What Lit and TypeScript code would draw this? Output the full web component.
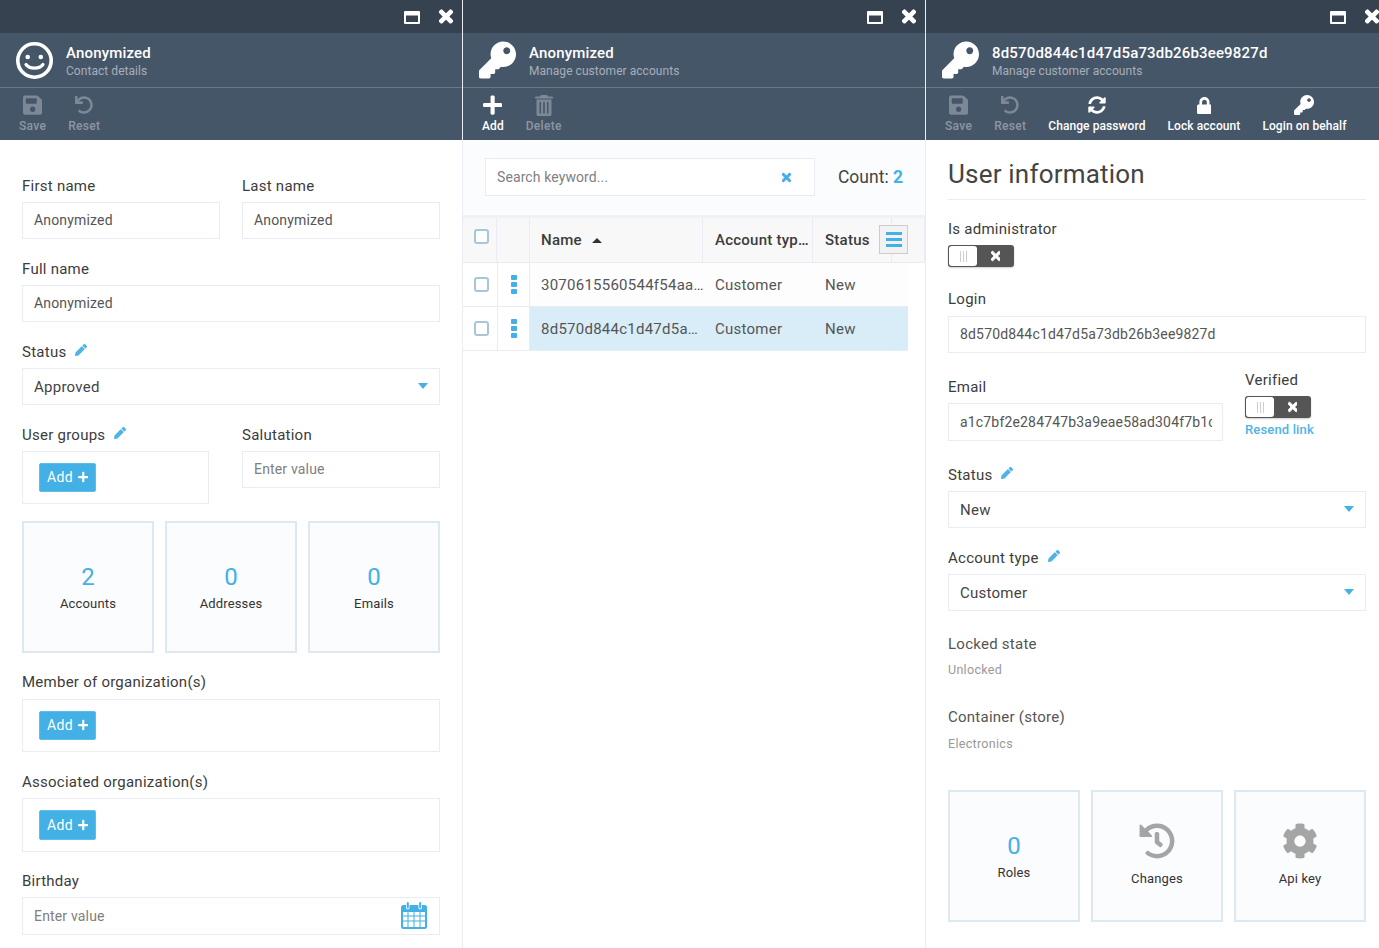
import { LitElement, html, css } from "lit";
import { customElement } from "lit/decorators.js";

const P: Record<string, [number, string]> = {
  key: [512, "M512 176.001C512 273.203 433.202 352 336 352c-11.22 0-22.19-1.062-32.827-3.069l-24.012 27.014A23.999 23.999 0 0 1 261.223 384H224v40c0 13.255-10.745 24-24 24h-40v40c0 13.255-10.745 24-24 24H24c-13.255 0-24-10.745-24-24v-78.059c0-6.365 2.529-12.47 7.029-16.971l161.802-161.802C163.108 213.814 160 195.271 160 176 160 78.798 238.797.001 335.999 0 433.488-.001 512 78.511 512 176.001zM336 128c0 26.51 21.49 48 48 48s48-21.49 48-48-21.49-48-48-48-48 21.49-48 48z"],
  save: [448, "M433.941 129.941l-83.882-83.882A48 48 0 0 0 316.118 32H48C21.49 32 0 53.49 0 80v352c0 26.51 21.49 48 48 48h352c26.51 0 48-21.49 48-48V163.882a48 48 0 0 0-14.059-33.941zM224 416c-35.346 0-64-28.654-64-64 0-35.346 28.654-64 64-64s64 28.654 64 64c0 35.346-28.654 64-64 64zm96-304.52V212c0 6.627-5.373 12-12 12H76c-6.627 0-12-5.373-12-12V108c0-6.627 5.373-12 12-12h228.52c3.183 0 6.235 1.264 8.485 3.515l3.48 3.48A11.996 11.996 0 0 1 320 111.48z"],
  undo: [512, "M212.333 224.333H12c-6.627 0-12-5.373-12-12V12C0 5.373 5.373 0 12 0h48c6.627 0 12 5.373 12 12v78.112C117.773 39.279 184.26 7.47 258.175 8.007c136.906.994 246.448 111.623 246.157 248.532C504.041 393.258 393.12 504 256.333 504c-64.089 0-122.496-24.313-166.51-64.215-5.099-4.622-5.334-12.554-.467-17.42l33.967-33.967c4.474-4.474 11.662-4.717 16.401-.525C170.76 415.336 211.58 432 256.333 432c97.268 0 176-78.716 176-176 0-97.267-78.716-176-176-176-58.496 0-110.28 28.476-142.274 72.333h98.274c6.627 0 12 5.373 12 12v48c0 6.627-5.373 12-12 12z"],
  times: [352, "M242.72 256l100.07-100.07c12.28-12.28 12.28-32.19 0-44.48l-22.24-22.24c-12.28-12.28-32.19-12.28-44.48 0L176 189.28 75.93 89.21c-12.28-12.28-32.19-12.28-44.48 0L9.21 111.45c-12.28 12.28-12.28 32.19 0 44.48L109.28 256 9.21 356.07c-12.28 12.28-12.28 32.19 0 44.48l22.24 22.24c12.28 12.28 32.2 12.28 44.48 0L176 322.72l100.07 100.07c12.28 12.28 32.2 12.28 44.48 0l22.24-22.24c12.28-12.28 12.28-32.19 0-44.48L242.72 256z"],
  lock: [448, "M400 224h-24v-72C376 68.2 307.8 0 224 0S72 68.2 72 152v72H48c-26.5 0-48 21.5-48 48v192c0 26.5 21.5 48 48 48h352c26.5 0 48-21.5 48-48V272c0-26.5-21.5-48-48-48zm-104 0H152v-72c0-39.7 32.3-72 72-72s72 32.3 72 72v72z"],
  sync: [512, "M370.72 133.28C339.458 104.008 298.888 87.962 255.848 88c-77.458.068-144.328 53.178-162.791 126.85-1.344 5.363-6.122 9.15-11.651 9.15H24.103c-7.498 0-13.194-6.807-11.807-14.176C33.933 94.924 134.813 8 256 8c66.448 0 126.791 26.136 171.315 68.685L463.03 40.97C478.149 25.851 504 36.559 504 57.941V192c0 13.255-10.745 24-24 24H345.941c-21.382 0-32.09-25.851-16.971-40.971l41.75-41.749zM32 296h134.059c21.382 0 32.09 25.851 16.971 40.971l-41.75 41.75c31.262 29.273 71.835 45.319 114.876 45.28 77.418-.07 144.315-53.144 162.787-126.849 1.344-5.363 6.122-9.15 11.651-9.15h57.304c7.498 0 13.194 6.807 11.807 14.176C478.067 417.076 377.187 504 256 504c-66.448 0-126.791-26.136-171.315-68.685L48.97 471.03C33.851 486.149 8 475.441 8 454.059V320c0-13.255 10.745-24 24-24z"],
  plus: [448, "M416 208H272V64c0-17.67-14.33-32-32-32h-32c-17.67 0-32 14.33-32 32v144H32c-17.67 0-32 14.33-32 32v32c0 17.67 14.33 32 32 32h144v144c0 17.67 14.33 32 32 32h32c17.67 0 32-14.33 32-32V304h144c17.67 0 32-14.33 32-32v-32c0-17.67-14.33-32-32-32z"],
  pencil: [512, "M497.9 142.1l-46.1 46.1c-4.7 4.7-12.3 4.7-17 0l-111-111c-4.7-4.7-4.7-12.3 0-17l46.1-46.1c18.7-18.7 49.1-18.7 67.9 0l60.1 60.1c18.8 18.7 18.8 49.1 0 67.9zM284.2 99.8L21.6 362.4.4 483.9c-2.9 16.4 11.4 30.6 27.8 27.8l121.5-21.3 262.6-262.6c4.7-4.7 4.7-12.3 0-17l-111-111c-4.8-4.7-12.4-4.7-17.1 0z"],
  cog: [512, "M487.4 315.7l-42.6-24.6c4.3-23.2 4.3-47 0-70.2l42.6-24.6c4.9-2.8 7.1-8.6 5.5-14-11.1-35.6-30-67.8-54.7-94.6-3.8-4.1-10-5.1-14.8-2.3L380.8 110c-17.9-15.4-38.5-27.3-60.8-35.1V25.8c0-5.6-3.9-10.5-9.4-11.7-36.7-8.2-74.3-7.8-109.2 0-5.5 1.2-9.4 6.1-9.4 11.7V75c-22.2 7.9-42.8 19.8-60.8 35.1L88.7 85.5c-4.9-2.8-11-1.9-14.8 2.3-24.7 26.7-43.6 58.9-54.7 94.6-1.7 5.4.6 11.2 5.5 14L67.3 221c-4.3 23.2-4.3 47 0 70.2l-42.6 24.6c-4.9 2.8-7.1 8.6-5.5 14 11.1 35.6 30 67.8 54.7 94.6 3.8 4.1 10 5.1 14.8 2.3l42.6-24.6c17.9 15.4 38.5 27.3 60.8 35.1v49.2c0 5.6 3.9 10.5 9.4 11.7 36.7 8.2 74.3 7.8 109.2 0 5.5-1.2 9.4-6.1 9.4-11.7v-49.2c22.2-7.9 42.8-19.8 60.8-35.1l42.6 24.6c4.9 2.8 11 1.9 14.8-2.3 24.7-26.7 43.6-58.9 54.7-94.6 1.5-5.5-.7-11.3-5.6-14.1zM256 336c-44.1 0-80-35.9-80-80s35.9-80 80-80 80 35.9 80 80-35.9 80-80 80z"],
  history: [512, "M504 255.531c.253 136.64-111.18 248.372-247.82 248.468-59.015.042-113.223-20.53-155.822-54.911-11.077-8.94-11.905-25.541-1.839-35.607l11.267-11.267c8.609-8.609 22.353-9.551 31.891-1.984C173.062 425.135 212.781 440 256 440c101.705 0 184-82.311 184-184 0-101.705-82.311-184-184-184-48.814 0-93.149 18.969-126.068 49.932l50.754 50.754c10.08 10.08 2.941 27.314-11.313 27.314H24c-8.837 0-16-7.163-16-16V38.627c0-14.254 17.234-21.393 27.314-11.314l49.372 49.372C129.209 34.136 189.552 8 256 8c136.81 0 247.747 110.78 248 247.531zm-180.912 78.784l9.823-12.63c8.138-10.463 6.253-25.542-4.21-33.679L288 256.349V152c0-13.255-10.745-24-24-24h-16c-13.255 0-24 10.745-24 24v135.651l65.409 50.874c10.463 8.137 25.541 6.253 33.679-4.21z"],
};

const ic = (n: string, cls = "") =>
  html`<svg class="ic ${cls}" viewBox="0 0 ${P[n][0]} 512" fill="currentColor"><path d="${P[n][1]}"></path></svg>`;

const smile = html`<svg class="big" viewBox="0 0 37 37" fill="none" stroke="currentColor">
  <circle cx="18.500" cy="18.500" r="16.700" stroke-width="3.600"></circle>
  <circle cx="11.700" cy="15" r="2.300" fill="currentColor" stroke="none"></circle>
  <circle cx="24.800" cy="15" r="2.300" fill="currentColor" stroke="none"></circle>
  <path d="M10 22.500c3.500 4.800 13.500 4.800 17 0" stroke-width="3.200" stroke-linecap="round"></path>
</svg>`;

const trash = html`<svg class="trash" viewBox="0 0 18 21" fill="currentColor">
  <path d="M6 0h6l1 1.500h4q1 0 1 1V3.500H0v-1q0-1 1-1h4z"></path>
  <path fill-rule="evenodd" d="M1.500 4.500h15V19.500q0 1.500-1.500 1.500H3q-1.500 0-1.500-1.500zM4.500 7v11.500h1.500V7zM8.200 7v11.500h1.600V7zM12 7v11.500h1.500V7z"></path>
</svg>`;

const maxi = html`<svg class="win" viewBox="0 0 16 13" fill="currentColor">
  <path fill-rule="evenodd" d="M1 0h14q1 0 1 1v11q0 1-1 1H1q-1 0-1-1V1q0-1 1-1zM2 4.500v6.500h12V4.500z"></path>
</svg>`;

const calendar = html`<svg class="cal" viewBox="0 0 26 27" fill="currentColor">
  <path fill-rule="evenodd" d="M2.500 3H5v2.500q0 2 1.800 2t1.800-2V3h8.800v2.500q0 2 1.800 2t1.800-2V3h2.500Q26 3 26 5.500V24.500Q26 27 23.500 27H2.500Q0 27 0 24.500V5.500Q0 3 2.500 3zM2 10v3.500h4.500V10zM7.500 10v3.500h5V10zM13.500 10v3.500h5V10zM19.500 10v3.500H24V10zM2 14.500V18.500h4.500V14.500zM7.500 14.500V18.500h5V14.500zM13.500 14.500V18.500h5V14.500zM19.500 14.500V18.500H24V14.500zM2 19.500V25h4.500V19.500zM7.500 19.500V25h5V19.500zM13.500 19.500V25h5V19.500zM19.500 19.500V25H24V19.500z"></path>
  <rect x="5.800" y="0" width="2" height="6.500" rx="1"></rect>
  <rect x="18.200" y="0" width="2" height="6.500" rx="1"></rect>
</svg>`;

const tb = (icon: unknown, label: string, on = false) =>
  html`<div class="tool ${on ? "on" : ""}"><span class="ti">${icon}</span><span class="tl">${label}</span></div>`;

const head = (icon: unknown, title: string, sub: string, tools: unknown) => html`
  <div class="top">${maxi}${ic("times", "x")}</div>
  <div class="title">
    <span class="logo">${icon}</span>
    <div class="tt"><div class="t1">${title}</div><div class="t2">${sub}</div></div>
  </div>
  <div class="tools">${tools}</div>
`;

const label = (t: string, edit = false) =>
  html`<div class="lbl">${t}${edit ? ic("pencil", "pen") : ""}</div>`;

const input = (v: string, ph = "") => html`<input class="inp" .value=${v} placeholder=${ph} />`;

const select = (v: string) => html`<div class="inp sel">${v}<i class="caret"></i></div>`;

const add = (cls = "") => html`<button class="add ${cls}">Add ${ic("plus", "pl")}</button>`;

const count = (n: string, t: string) =>
  html`<div class="tile"><div class="num">${n}</div><div class="cap">${t}</div></div>`;

const iconTile = (n: string, t: string) =>
  html`<div class="tile itile">${ic(n, "tic")}<div class="cap low">${t}</div></div>`;

const toggle = html`<div class="tog"><div class="knob"><i></i><i></i><i></i></div><div class="off">${ic("times", "tx")}</div></div>`;

const row = (name: string, sel = false) => html`
  <div class="tr ${sel ? "sel" : ""}">
    <div class="c chk"><span class="box"></span></div>
    <div class="c keb"><i></i><i></i><i></i></div>
    <div class="c nm">${name}</div>
    <div class="c">Customer</div>
    <div class="c">New</div>
  </div>`;

@customElement("app-root")
export class AppRoot extends LitElement {
  static styles = css`
    :host {
      display: flex;
      width: 1379px;
      height: 948px;
      overflow: hidden;
      background: #fff;
      font-family: Roboto, "Liberation Sans", sans-serif;
      color: #333;
      font-size: 14px;
    }
    * { box-sizing: border-box; }
    .blade { width: 463px; flex: none; height: 948px; border-right: 1px solid #e8ecf3; overflow: hidden; display: flex; flex-direction: column; }
    .blade.last { width: 453px; border-right: 0; }
    .ic { height: 1em; width: auto; display: block; }
    .top { height: 33px; background: #36424f; color: #fff; display: flex; justify-content: flex-end; align-items: center; padding-right: 9px; gap: 19px; width: 462px; flex: none; }
    .win { width: 16px; height: 13px; display: block; margin-top: 1px; }
    .x { font-size: 19px; margin-top: -1px; width: 14px; stroke: currentColor; stroke-width: 30; }
    .title { height: 55px; width: 463px; background: #465669; border-bottom: 1px solid #6b7887; display: flex; align-items: center; padding: 0 16px; gap: 13px; color: #fff; flex: none; }
    .logo { width: 37px; flex: none; font-size: 38px; display: flex; }
    .big { width: 37px; height: 37px; display: block; }
    .t1 { font-size: 15px; font-weight: 500; line-height: 18px; margin-top: 2px; letter-spacing: .17px; }
    .t2 { font-size: 12px; color: #a6aeb8; line-height: 16px; margin-top: 1px; letter-spacing: .05px; }
    .tools { height: 52px; width: 463px; background: #465669; display: flex; padding-left: 19px; gap: 22px; flex: none; }
    .tool { display: flex; flex-direction: column; align-items: center; font-size: 12px; font-weight: 500; letter-spacing: .3px; color: #8c96a3; padding-top: 5px; }
    .tool.on { color: #fff; letter-spacing: .08px; }
    .ti { height: 24px; display: flex; align-items: center; color: #7d8896; margin-bottom: 2px; }
    .tool.on .ti { color: #fff; }
    .tl { line-height: 14px; }
    .ti .s22 { height: 22px; }
    .ti .s20 { height: 20px; }
    .ti .s18 { height: 18px; }
    .ti .s17 { height: 17px; }
    .trash { width: 18px; height: 21px; display: block; }

    .body { padding: 38px 22px 0; flex: 1; }
    .lbl { font-size: 15px; line-height: 16px; height: 16px; letter-spacing: .25px; color: #3c3c3c; margin-bottom: 8px; display: flex; align-items: flex-start; white-space: nowrap; }
    .pen { color: #4fb3e8; margin-left: 9px; margin-top: 0; height: 12px; }
    .inp { display: flex; align-items: center; width: 100%; height: 37px; border: 1px solid #e8ecf3; padding: 0 10px 2px 11px; font: 14px Roboto, sans-serif; letter-spacing: .17px; color: #555; background: #fff; outline: 0; position: relative; border-radius: 0; }
    .inp::placeholder { color: #808080; opacity: 1; }
    .inp.tall { height: 38px; padding-bottom: 0; }
    .sel { color: #444; font-size: 15px; letter-spacing: .25px; padding-bottom: 0; }
    .caret { position: absolute; right: 11px; top: 14px; border: 5px solid transparent; border-top: 6px solid #43b0e6; border-bottom: 0; }
    .cols { display: grid; grid-template-columns: 198px 198px; column-gap: 22px; }
    .gap { margin-top: 22px; }
    .box-add { border: 1px solid #e8ecf3; padding: 11px 16px; background: #fff; }
    .h53 { height: 53px; }
    .h54 { height: 54px; }
    .w187 { width: 187px; }
    .add { display: flex; align-items: center; height: 29px; width: 57px; padding: 0 0 1px 7px; gap: 5px; background: #43b0e6; border: 1px solid #5fbdea; border-radius: 2px; color: #fff; font: 14px Roboto, sans-serif; letter-spacing: .3px; }
    .add.t30 { height: 30px; padding-bottom: 0; }
    .pl { height: 12px; }
    .tiles { display: grid; grid-template-columns: repeat(3, 132px); column-gap: 11px; }
    .tile { height: 132px; border: 2px solid #dde9f0; background: #fbfcfe; display: flex; flex-direction: column; align-items: center; justify-content: center; }
    .itile { padding-bottom: 3px; }
    .num { font-size: 24px; color: #43b0e6; line-height: 28px; }
    .cap { font-size: 13px; line-height: 16px; letter-spacing: .15px; color: #333; margin-top: 5px; }
    .cap.low { margin-top: 12px; }
    .tic { color: #a5a5a5; height: 36px; }
    .m17 { margin-top: 17px; }
    .m21 { margin-top: 21px; }
    .m24 { margin-top: 24px; }
    .m9 { margin-top: 9px; }
    .m26 { margin-top: 26px; }
    .m19 { margin-top: 19px; }
    .m25 { margin-top: 25px; }
    .m31 { margin-top: 31px; }
    .m38 { margin-top: 38px; }
    .m10 { margin-top: 10px; }
    .m11 { margin-top: 11px; }

    .search { height: 75px; flex: none; padding: 18px 22px 0; display: flex; align-items: flex-start; background: #fbfcfe; }
    .sb { width: 330px; height: 38px; border: 1px solid #e8ecf3; background: #fff; display: flex; align-items: center; padding: 0 12px 0 11px; font-size: 14px; letter-spacing: .1px; color: #808080; justify-content: space-between; }
    .sx { color: #43b0e6; height: 13px; margin-right: 11px; stroke: currentColor; stroke-width: 30; }
    .cnt { margin-left: 23px; font-size: 17.5px; line-height: 38px; color: #444; }
    .cnt b { color: #43b0e6; font-weight: 700; }
    .sep { height: 3px; background: #eef1f6; flex: none; width: 462px; }
    .tr { display: grid; grid-template-columns: 35px 32px 173px 110px 95px; width: 445px; font-size: 15px; }
    .th { display: grid; height: 45px; width: 462px; background: #f8f8f8; border-bottom: 1px solid #e8ecf3; font-weight: 500; font-size: 15px; grid-template-columns: 34px 33px 173px 110px 79px 1fr; letter-spacing: .25px; color: #3c3c3c; position: relative; }
    .th .c { height: 44px; border-right: 1px solid #e8ecf3; }
    .th .c:last-child { border-right: 0; }
    .c { display: flex; align-items: center; padding-left: 12px; white-space: nowrap; overflow: hidden; }
    .c.nm { padding-left: 11px; }
    .tr { height: 44px; border-bottom: 1px solid #e8ecf3; letter-spacing: .25px; color: #555; }
    .tr .c:nth-child(n+3) { background: #fdfdfd; }
    .tr.sel .c:nth-child(n+3) { background: #d9edf9; }
    .chk, .keb { padding-left: 0; justify-content: center; border-right: 1px solid #e8ecf3; }
    .chk { padding-left: 3px; }
    .box { width: 15px; height: 15px; border: 2px solid #a8c6da; border-radius: 3px; background: #fff; display: block; }
    .th .chk { align-items: flex-start; padding-top: 11px; }
    .keb { flex-direction: column; gap: 2px; }
    .keb i { width: 6px; height: 5px; background: #43b0e6; border-radius: 1px; display: block; }
    .tri { border: 5px solid transparent; border-bottom: 5px solid #333; border-top: 0; margin-left: 10px; }
    .mn { position: absolute; left: 416px; top: 7px; width: 29px; height: 29px; background: #f2f2f2; border: 1px solid #ccc; display: flex; flex-direction: column; justify-content: center; align-items: center; gap: 3px; }
    .mn i { width: 16px; height: 3px; background: #43b0e6; display: block; }

    .h2 { font-size: 26px; line-height: 28px; font-weight: 400; letter-spacing: .2px; height: 40px; border-bottom: 1px solid #e8ecf3; color: #444; margin: 0; padding-bottom: 2px; }
    .rbody { padding: 20px 13px 0 22px; flex: 1; background: #fff; }
    .tog { width: 66px; height: 22px; border-radius: 3px; background: #555; display: flex; padding: 1px 0 1px 1px; box-shadow: 0 1px 2px rgba(0,0,0,.2); }
    .knob { width: 28px; height: 20px; background: #fff; border-radius: 3px; display: flex; justify-content: center; align-items: center; gap: 2px; }
    .knob i { width: 1px; height: 11px; background: #c6d4c6; display: block; }
    .off { flex: 1; display: flex; align-items: center; justify-content: center; color: #fff; }
    .tx { height: 14px; stroke: currentColor; stroke-width: 30; }
    .resend { font-size: 13px; font-weight: 500; letter-spacing: .15px; color: #4fb3e8; line-height: 14px; margin-top: 5px; }
    .em { display: grid; grid-template-columns: 275px 1fr; column-gap: 22px; }
    .plain { font-size: 15px; letter-spacing: .25px; line-height: 16px; color: #555; }
    .sm { font-size: 12.5px; line-height: 16px; color: #999; letter-spacing: .3px; }
    .datebox { height: 38px; color: #808080; padding-bottom: 0; }
    .calwrap { position: absolute; right: 12px; top: 4px; color: #43b0e6; display: flex; }
    .cal { width: 26px; height: 27px; display: block; }
  `;

  render() {
    const t1 = html`${tb(ic("save", "s22"), "Save")}${tb(ic("undo", "s18"), "Reset")}`;
    return html`
      <section class="blade">
        ${head(smile, "Anonymized", "Contact details", t1)}
        <div class="body">
          <div class="cols">
            <div>${label("First name")}${input("Anonymized")}</div>
            <div>${label("Last name")}${input("Anonymized")}</div>
          </div>
          <div class="gap">${label("Full name")}${input("Anonymized")}</div>
          <div class="gap">${label("Status", true)}${select("Approved")}</div>
          <div class="cols gap">
            <div>${label("User groups", true)}<div class="box-add w187 h53">${add()}</div></div>
            <div>${label("Salutation")}${input("", "Enter value")}</div>
          </div>
          <div class="tiles m17">
            ${count("2", "Accounts")}${count("0", "Addresses")}${count("0", "Emails")}
          </div>
          <div class="m21">${label("Member of organization(s)")}<div class="box-add h53 m9">${add()}</div></div>
          <div class="gap">${label("Associated organization(s)")}<div class="box-add h54">${add("t30")}</div></div>
          <div class="m21">${label("Birthday")}<div class="inp datebox">Enter value<span class="calwrap">${calendar}</span></div></div>
        </div>
      </section>

      <section class="blade">
        ${head(ic("key"), "Anonymized", "Manage customer accounts", html`${tb(ic("plus", "s22"), "Add", true)}${tb(trash, "Delete")}`)}
        <div class="search">
          <div class="sb">Search keyword...${ic("times", "sx")}</div>
          <div class="cnt">Count: <b>2</b></div>
        </div>
        <div class="sep"></div>
        <div class="th">
          <div class="c chk"><span class="box"></span></div>
          <div class="c keb"></div>
          <div class="c nm">Name<i class="tri"></i></div>
          <div class="c">Account typ…</div>
          <div class="c">Status</div>
          <div class="c"></div>
          <div class="mn"><i></i><i></i><i></i></div>
        </div>
        ${row("3070615560544f54aa…")}
        ${row("8d570d844c1d47d5a…", true)}
      </section>

      <section class="blade last">
        ${head(ic("key"), "8d570d844c1d47d5a73db26b3ee9827d", "Manage customer accounts", html`${t1}${tb(ic("sync", "s18"), "Change password", true)}${tb(ic("lock", "s17"), "Lock account", true)}${tb(ic("key", "s20"), "Login on behalf", true)}`)}
        <div class="rbody">
          <h2 class="h2">User information</h2>
          <div class="m21">${label("Is administrator")}${toggle}</div>
          <div class="m24">${label("Login")}<div class="m9">${input("8d570d844c1d47d5a73db26b3ee9827d")}</div></div>
          <div class="em">
            <div class="m26">${label("Email")}<input class="inp tall" .value=${"a1c7bf2e284747b3a9eae58ad304f7b1c0d2e6a9"} /></div>
            <div class="m19">${label("Verified")}${toggle}<div class="resend">Resend link</div></div>
          </div>
          <div class="m26">${label("Status", true)}${select("New")}</div>
          <div class="gap">${label("Account type", true)}${select("Customer")}</div>
          <div class="m25"><div class="plain">Locked state</div><div class="sm m10">Unlocked</div></div>
          <div class="m31"><div class="plain">Container (store)</div><div class="sm m11">Electronics</div></div>
          <div class="tiles m38">
            ${count("0", "Roles")}${iconTile("history", "Changes")}${iconTile("cog", "Api key")}
          </div>
        </div>
      </section>
    `;
  }
}
